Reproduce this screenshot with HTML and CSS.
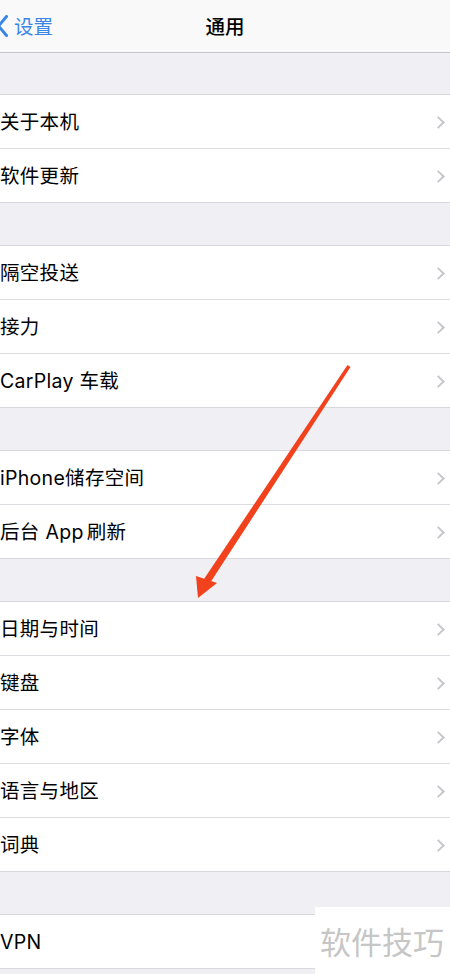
FILE: index.html
```html
<!DOCTYPE html>
<html lang="zh">
<head>
<meta charset="utf-8">
<title>通用</title>
<link rel="stylesheet" href="styles.css">
</head>
<body>
<div class="page">
  <header class="nav">
    <div class="back">
      <svg class="back-icon" width="8" height="22" viewBox="0 0 8 22"><polyline points="6.5,1.5 -1.5,11 6.5,20.5" fill="none" stroke="#3a86e6" stroke-width="3" stroke-linecap="round" stroke-linejoin="round"/></svg>
      <span class="back-text">设置</span>
    </div>
    <div class="title">通用</div>
  </header>

  <div class="gap"></div>
  <section class="group">
    <div class="row"><span class="label">关于本机</span><span class="chev"></span></div>
    <div class="row"><span class="label">软件更新</span><span class="chev"></span></div>
  </section>

  <div class="gap"></div>
  <section class="group">
    <div class="row"><span class="label">隔空投送</span><span class="chev"></span></div>
    <div class="row"><span class="label">接力</span><span class="chev"></span></div>
    <div class="row"><span class="label">CarPlay 车载</span><span class="chev"></span></div>
  </section>

  <div class="gap"></div>
  <section class="group">
    <div class="row"><span class="label">iPhone储存空间</span><span class="chev"></span></div>
    <div class="row"><span class="label">后台 App<span class="thin"></span>刷新</span><span class="chev"></span></div>
  </section>

  <div class="gap"></div>
  <section class="group">
    <div class="row"><span class="label">日期与时间</span><span class="chev"></span></div>
    <div class="row"><span class="label">键盘</span><span class="chev"></span></div>
    <div class="row"><span class="label">字体</span><span class="chev"></span></div>
    <div class="row"><span class="label">语言与地区</span><span class="chev"></span></div>
    <div class="row"><span class="label">词典</span><span class="chev"></span></div>
  </section>

  <div class="gap"></div>
  <section class="group">
    <div class="row"><span class="label">VPN</span><span class="chev"></span></div>
  </section>

  <svg class="arrow" width="450" height="974" viewBox="0 0 450 974">
    <polygon points="347.5,365 350.5,367 210,583 204,579" fill="#f2421d"/>
    <polygon points="198,598 196,576 217,583" fill="#f2421d"/>
  </svg>

  <div class="watermark">软件技巧</div>
</div>
</body>
</html>
```

FILE: styles.css
```css
* { box-sizing: border-box; }
html, body {
  margin: 0;
  padding: 0;
  background: #efeff4;
}
.page {
  position: relative;
  width: 450px;
  height: 974px;
  overflow: hidden;
  background: #efeff4;
  font-family: "Inter", "Noto Sans CJK SC", sans-serif;
  color: #000;
}
.nav {
  height: 53px;
  background: #f9f9fa;
  border-bottom: 1px solid #c4c4c8;
  display: flex;
  align-items: center;
  justify-content: center;
  position: relative;
}
.back {
  position: absolute;
  left: 0;
  top: 15px;
  display: flex;
  align-items: center;
  gap: 6px;
}
.back-icon { display: block; }
.back-text {
  font-family: "Noto Sans CJK SC", sans-serif;
  font-size: 19.5px;
  color: #3a86e6;
  line-height: 22px;
}
.title {
  font-family: "Noto Sans CJK SC", sans-serif;
  font-size: 19.5px;
  font-weight: 500;
  line-height: 22px;
  margin-top: -1px;
}
.gap { height: 41px; }
.group {
  background: #fff;
  border-top: 1px solid #d8d8dc;
  border-bottom: 1px solid #d8d8dc;
  display: flex;
  flex-direction: column;
}
.page > .gap:not(:first-of-type) { height: 42px; }
.row {
  height: 54px;
  display: flex;
  align-items: center;
  justify-content: space-between;
  border-bottom: 1px solid #dcdce0;
  padding: 0 4px 0 0;
}
.row:last-child {
  height: 53px;
  border-bottom: none;
}
.label {
  font-size: 19.5px;
  line-height: 24px;
  letter-spacing: 0.3px;
  margin-top: 1px;
}
.thin {
  display: inline-block;
  width: 3px;
}
.chev {
  width: 9px;
  height: 9px;
  border-top: 2px solid #c7c7cc;
  border-right: 2px solid #c7c7cc;
  transform: rotate(45deg);
  margin-right: 3px;
  margin-top: 1px;
}
.arrow {
  position: absolute;
  left: 0;
  top: 0;
  pointer-events: none;
}
.watermark {
  position: absolute;
  left: 315px;
  top: 907px;
  width: 135px;
  height: 67px;
  background: #fff;
  color: #c6c6c6;
  font-family: "Noto Sans CJK SC", sans-serif;
  font-size: 31px;
  line-height: 67px;
  padding-left: 5px;
}
```
